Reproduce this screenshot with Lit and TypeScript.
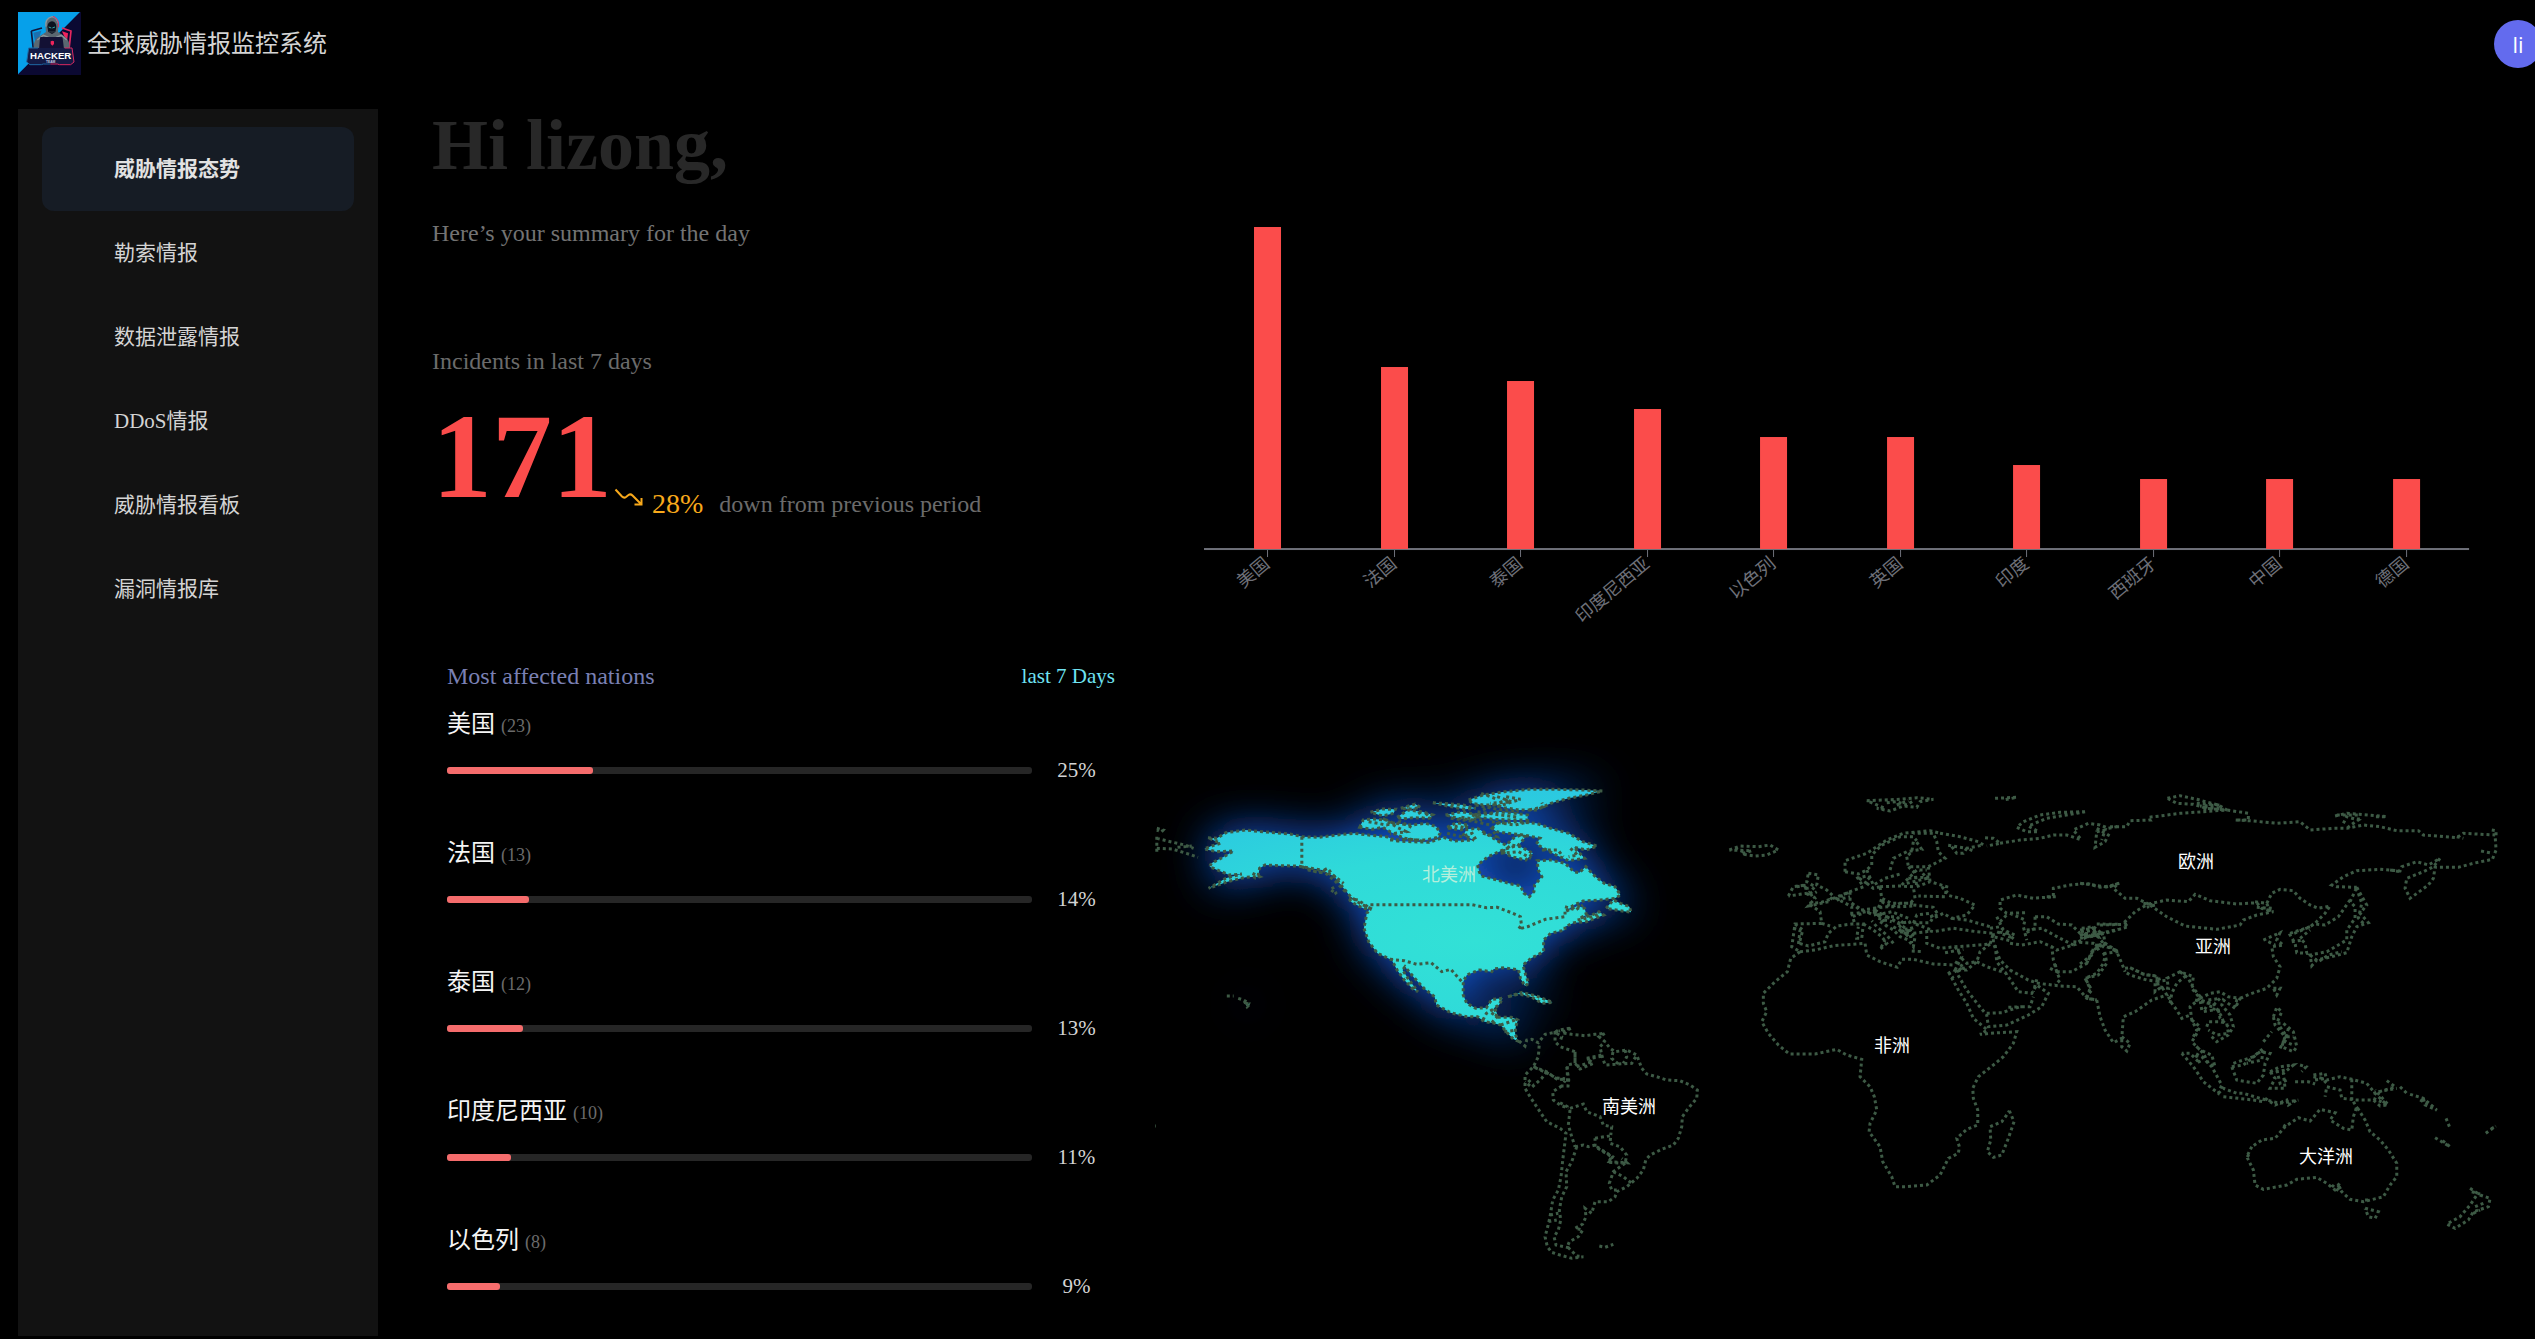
import { LitElement, html, svg, css } from "lit";
import { customElement, state } from "lit/decorators.js";

interface Nation {
  name: string;
  count: number;
  share: number;
}

const MENU = ["威胁情报态势", "勒索情报", "数据泄露情报", "DDoS情报", "威胁情报看板", "漏洞情报库"];

const NATIONS: Nation[] = [
  { name: "美国", count: 23, share: 25 },
  { name: "法国", count: 13, share: 14 },
  { name: "泰国", count: 12, share: 13 },
  { name: "印度尼西亚", count: 10, share: 11 },
  { name: "以色列", count: 8, share: 9 },
];

const CHART: [string, number][] = [
  ["美国", 23],
  ["法国", 13],
  ["泰国", 12],
  ["印度尼西亚", 10],
  ["以色列", 8],
  ["英国", 8],
  ["印度", 6],
  ["西班牙", 5],
  ["中国", 5],
  ["德国", 5],
];

/** A group of outlines drawn on its own sheet: origin on the map, and sheet units per map unit. */
interface Sheet {
  x: number;
  y: number;
  sx: number;
  sy: number;
  lines: string[];
}

const trace = (s: Sheet, line: string, close = false): string => {
  const n = line.trim().split(/[\s,]+/).map(Number);
  let d = "";
  for (let i = 0; i < n.length; i += 2) {
    d += `${i ? "L" : "M"}${(s.x + n[i] / s.sx).toFixed(1)} ${(s.y + n[i + 1] / s.sy).toFixed(1)}`;
  }
  return close ? d + "Z" : d;
};

const outline = (s: Sheet, close = false): string => s.lines.map((l) => trace(s, l, close)).join("");

const NORTH_AMERICA: Sheet = {
  x: -15,
  y: 83,
  sx: 2.8,
  sy: 3,
  lines: [
    "190,293 215,295 240,278 295,270 350,276 420,282 455,290 500,292 550,285 600,280 640,285 690,290 720,303 760,305 810,307 850,292 880,303 935,300 905,285 915,268 945,265 975,285 1005,305 1025,315 1045,295 1065,285 1080,290 1060,315 1020,328 975,350 945,375 950,395 955,408 1000,420 1040,432 1065,437 1075,460 1090,470 1103,455 1105,435 1125,410 1115,390 1112,362 1150,360 1190,370 1215,395 1230,398 1248,380 1275,410 1300,430 1330,440 1345,465 1330,475 1290,480 1240,483 1215,495 1190,515 1225,498 1245,505 1250,525 1230,535 1265,525 1285,515 1298,525 1250,545 1215,548 1190,560 1190,570 1150,580 1130,600 1130,635 1095,655 1072,675 1080,705 1088,730 1078,738 1065,715 1060,690 1020,683 990,687 985,695 950,690 915,705 905,725 905,765 915,790 940,805 970,803 985,778 1015,775 1005,795 990,805 1000,820 995,832 1040,832 1058,840 1052,860 1050,880 1058,903 1045,897 1025,875 1010,855 985,848 965,845 945,830 915,830 870,818 830,795 825,770 795,745 765,710 742,680 735,690 750,715 778,755 765,748 740,720 720,690 705,660 665,640 640,605 627,565 635,520 645,505 615,490 590,470 570,445 545,410 510,390 480,385 440,378 390,377 350,375 335,385 330,410 295,412 245,425 192,445 240,415 285,402 250,405 195,380 200,370 235,350 262,333 215,335 180,327 200,318 225,310 190,293",
    "615,262 625,240 650,237 690,240 710,250 760,255 800,250 830,260 840,280 835,292 800,300 770,300 740,295 720,285 700,275 680,262 650,268",
    "645,217 680,207 715,208 710,220 680,228",
    "720,232 750,210 790,215 820,225 810,235 765,233 735,237",
    "730,205 770,192 785,202 760,207",
    "820,188 870,192 905,195 940,205 910,208 860,198",
    "855,225 900,215 950,225 930,240 890,235",
    "860,262 885,248 920,255 900,270 865,265",
    "920,180 960,165 1020,155 1090,148 1170,148 1240,150 1295,153 1250,165 1200,175 1150,190 1110,210 1060,210 1020,203 1000,195 960,195 930,190",
    "930,225 975,222 1000,215 1050,220 1085,225 1085,240 1040,240 990,238 950,232",
    "985,265 1000,250 1050,245 1110,250 1150,265 1200,280 1240,305 1280,318 1250,330 1215,322 1245,355 1200,362 1165,345 1130,325 1110,312 1120,295 1075,285 1030,280 1000,275",
    "1015,335 1040,315 1065,320 1100,340 1080,360 1040,350",
    "1305,505 1325,480 1345,490 1370,500 1375,517 1350,513 1320,508",
    "1030,770 1070,757 1110,768 1155,787 1125,790 1095,770 1060,762",
    "585,475 610,480 648,508 625,505 590,485",
    "295,790 308,792 300,800",
  ],
};

const NORTH_AMERICA_BORDERS: Sheet = {
  ...NORTH_AMERICA,
  lines: [
    "453,290 453,380",
    "453,380 500,398 525,385 540,405 570,430",
    "470,390 520,400 548,425 575,455",
    "645,494 930,494 970,503 1000,502 1040,518 1065,530 1068,555 1060,567 1085,560 1135,538 1190,530 1190,515",
    "700,658 740,662 775,673 815,668 845,695 870,688 905,730",
    "960,840 970,820 985,810 1000,810",
    "985,848 1000,830 980,815",
    "1010,855 1055,838",
    "1020,875 1055,870",
    "538,440 550,462 535,450",
    "315,400 335,410 320,415",
    "1025,170 1065,178 1000,200",
    "940,195 1000,208 1060,215",
    "1000,170 1040,185 980,190",
    "955,160 1000,178",
    "960,210 1000,190 1030,180",
    "870,235 940,245 980,255",
    "900,232 960,240",
    "945,215 1010,225 1060,232",
    "985,245 1050,255 1090,245",
    "1090,210 1130,200 1125,188",
    "680,235 720,262 745,275 700,282",
    "640,245 690,255 730,245 760,262",
    "700,300 760,298 800,305",
    "780,215 790,232",
    "800,220 815,235",
    "860,280 900,290 930,280 940,298",
    "865,265 890,258 915,265",
    "1010,340 1060,335 1095,355",
    "1125,330 1170,330 1185,350",
    "1205,325 1225,345 1200,350",
    "960,280 1000,290 985,268",
    "1190,500 1220,510 1240,495",
    "1225,540 1250,535 1290,520",
    "243,768 262,768",
    "275,775 290,780 308,792",
    "47,265 65,270 60,276 47,270",
    "47,295 85,305 125,315 150,325",
    "105,322 145,318",
    "47,325 90,327 130,340 162,352",
    "47,290 47,340",
    "40,1158 44,1158",
  ],
};

const SOUTH_AMERICA: Sheet = {
  x: 325,
  y: 343,
  sx: 3,
  sy: 3,
  lines: [
    "117,123 135,138 140,120 155,118 175,128 195,103 225,97 235,90 275,84 245,98 275,103 315,107 345,103 375,100 357,110 375,125 390,145 405,155 440,150 470,165 485,205 500,222 530,230 560,240 600,242 630,255 652,270 650,295 625,325 607,350 605,380 595,415 580,435 545,448 510,465 497,480 490,510 470,535 440,560 410,575 405,590 385,605 345,605 335,640 315,625 318,650 308,672 285,685 308,690 295,710 268,725 262,740 290,768 310,770 275,775 240,765 215,757 202,740 195,710 203,680 210,650 218,600 235,570 243,530 248,480 258,400 240,385 200,365 180,335 150,290 135,265 135,225 160,200 175,170 178,130",
    "290,440 275,485 258,515 260,560 245,590 238,630 242,660 235,690 222,710 228,735 275,745",
    "210,645 235,640",
    "205,665 230,660",
    "160,200 200,215 230,237 262,240 262,195 285,190 285,155 240,140 225,125 225,97 240,92",
    "165,203 200,218 228,234 255,236",
    "260,200 266,240 264,258 245,258 255,242",
    "200,215 185,235 155,262 135,245",
    "145,240 160,255",
    "245,258 218,275 220,300 240,315 265,325",
    "240,308 262,320 268,330",
    "270,330 265,375 275,410 285,440",
    "270,325 310,312 320,335 360,350 370,375 395,380 392,405",
    "345,415 392,407 390,430 420,440 440,465 435,490 385,487 395,470 345,440 345,415",
    "350,440 398,470 388,485 440,488 425,475",
    "285,440 310,435 325,440 345,435",
    "435,490 400,515 388,550 395,570 410,570",
    "400,515 430,530 455,550",
    "285,155 285,190 300,207 340,190 320,175 365,165 360,140 375,125",
    "320,178 368,168",
    "290,200 335,185",
    "365,165 375,195 415,192 395,175 400,150",
    "415,192 455,190 470,165",
    "435,150 440,170 430,190",
    "230,100 245,110 240,125",
    "358,738 375,742 400,733",
  ],
};

const AFRICA_EUROPE: Sheet = {
  x: 545,
  y: 113,
  sx: 3,
  sy: 3,
  lines: [
    "300,545 272,565 262,605 225,635 190,670 190,700 200,725 185,755 205,790 235,825 268,852 345,852 410,838 440,855 485,868 480,920 510,950 523,980 530,1020 510,1060 507,1085 540,1130 548,1175 575,1220 585,1250 620,1250 680,1245 720,1215 745,1165 775,1150 778,1130 770,1105 800,1078 833,1065 833,1020 820,985 818,955 835,920 880,885 910,860 940,820 950,785 895,788 840,793 862,780 820,745 800,700 775,660 745,605",
    "300,545 345,540 400,527 495,520 500,555 540,575 592,592 605,568 640,568 700,582 765,585",
    "928,1022 942,1055 925,1105 905,1155 880,1162 862,1145 872,1110 870,1070 905,1055 920,1035 928,1022",
    "88,240 120,228 175,230 210,225 235,240 200,255 165,258 125,252 155,242 88,240",
    "105,235 135,248",
    "500,92 550,90 600,88 650,83 700,88 660,95 650,112 610,108 570,123 530,115 555,115 500,92",
    "560,98 590,95 620,105 640,92",
    "590,105 625,92",
    "885,85 950,82 910,90",
    "1155,125 1080,127 1020,135 970,155 950,172 980,185 1015,185 985,168 1040,145 1100,135 1155,125",
    "325,310 355,315 350,345 380,360 400,378 385,395 340,405 325,408 345,385 330,365 345,350 320,335 325,310",
    "265,378 280,350 315,345 320,370 265,378",
    "290,350 320,345 325,380 350,365",
    "435,305 435,272 500,250 560,210 610,190 690,182 720,190",
    "435,305 475,312 500,300 515,285 515,255 545,225 600,200 640,200 650,212",
    "500,300 520,345 555,325 600,312",
    "570,300 580,265 620,245 665,238 645,210",
    "470,325 500,318 515,335",
    "620,260 625,290 685,290 735,265 715,245 710,215 700,190 640,190",
    "640,215 635,245 620,260",
    "720,190 780,200 835,215 850,225 800,235 740,225",
    "755,230 770,250 790,250 800,235 825,245",
    "855,203 880,205 900,220 860,228",
    "900,220 960,210 1020,205 1060,195 1100,195 1145,210",
    "1140,205 1120,180 1165,160 1200,165 1225,175 1260,168",
    "1190,175 1225,195 1215,215 1185,232 1190,185 1215,180 1205,210",
    "500,340 470,320 490,350 450,365 405,383 360,398 325,400 360,425 365,460 285,462 275,530 300,545",
    "285,462 308,480 298,520 325,528 375,515 385,490 410,468 455,462 490,462 485,505 470,505 475,470",
    "280,475 300,480 295,525",
    "365,460 390,468",
    "455,430 465,465",
    "490,462 520,480 545,500 560,520 540,538 555,510",
    "580,520 560,495 530,470 515,452",
    "540,455 580,480 600,500 625,510 640,530 645,500 610,470 570,445",
    "600,485 630,490 635,520",
    "640,490 680,485",
    "680,480 680,520 720,535 765,530 800,528 870,522 880,490 830,485 760,475 700,485 680,480",
    "690,478 640,460 650,435 690,430 700,445 730,430 755,445 800,435 825,405 780,385 740,375",
    "640,458 690,458 700,440",
    "755,445 800,450 870,470",
    "640,405 700,412 715,435 690,440",
    "540,350 600,348 640,350 645,385 630,400 575,400 545,385 540,350",
    "650,350 690,335 740,350 735,380 655,378",
    "725,350 740,365 730,378",
    "625,290 645,310 650,350",
    "685,290 690,335",
    "625,325 690,320",
    "605,345 630,320 650,300 680,300",
    "620,340 680,325 660,300",
    "450,365 450,395 480,420 535,415 545,385",
    "500,340 520,355 540,350",
    "405,383 455,410 455,440 490,430",
    "420,380 450,365",
    "410,390 450,380",
    "455,400 500,428 535,420",
    "520,415 560,410 600,410 640,408",
    "545,395 575,410 600,400 640,400",
    "530,435 575,425 625,445 635,475 600,480",
    "520,425 545,445 560,470",
    "525,420 555,440 590,440 610,460 590,478",
    "560,440 600,460 630,455",
    "470,430 500,425 520,435 545,430",
    "580,470 615,490 635,478",
    "535,445 575,455",
    "605,480 625,500",
    "765,530 785,560 765,600 800,600 830,575 800,580 780,560",
    "735,548 790,538",
    "765,575 790,590 770,605 800,590",
    "635,543 670,545",
    "765,600 800,660 835,705 860,735 865,770 920,765 985,735 1025,710 1045,670 1010,645 995,670 955,665 925,620 890,575 885,520",
    "745,605 760,625",
    "860,730 905,728 960,710 990,710 1000,680",
    "925,712 970,710",
    "830,575 860,590 920,610 935,600",
    "870,522 840,545 830,575",
    "880,490 880,520 900,570 930,600 985,630 1015,640 1080,648 1130,650 1160,685 1190,690",
    "1010,628 1000,665",
    "930,520 965,525 1020,515 1055,530 1060,570 1070,605 1080,630 1065,645",
    "980,480 1025,475 1080,505 1120,525 1070,540 1055,530",
    "1005,440 1040,440 1075,462 1115,465 1140,490 1180,500",
    "1005,440 1005,475 975,490",
    "975,428 920,430 900,415 900,390 950,375 1000,385 1060,380 1060,355 1110,345 1160,340 1200,352 1245,345",
    "930,430 975,450 970,470 980,510",
    "900,455 925,430",
    "1040,380 1070,380",
    "890,440 910,480 945,495 930,512 880,500",
    "870,475 900,470 920,490 890,485 940,505",
    "1070,605 1115,605 1160,580 1180,540 1215,520 1255,545",
    "1050,595 1070,605 1065,580",
    "1120,525 1160,500 1210,490 1215,520",
    "1120,515 1180,520 1205,530",
    "1145,475 1180,470 1205,490 1150,500 1140,485 1190,480 1165,500",
    "1155,490 1195,500 1175,470",
    "1190,462 1260,463",
    "1200,490 1255,478",
    "1160,580 1175,545 1210,530",
    "1255,545 1215,550 1220,580 1195,615 1155,625 1175,660 1155,685",
  ],
};

const ASIA_OCEANIA: Sheet = {
  x: 925,
  y: 113,
  sx: 3,
  sy: 3,
  lines: [
    "90,170 140,170 150,152 210,150 205,142 240,138 300,130 370,125 440,120 505,130 505,150 465,150 520,153 590,160 660,155 690,180 760,175 800,175 850,165 900,170 950,182 1015,182 1030,195 1130,203 1150,190 1245,195 1248,240 1237,268 1180,280 1135,292 1065,292 1060,325 1045,345 990,385 975,355 980,325 1030,305 1060,290 1080,265 1045,285 1010,275 965,290 960,303 900,298 830,302 790,320 755,345 770,350 830,352",
    "1130,200 1150,205",
    "930,300 960,305",
    "1235,180 1248,182 1248,200",
    "1203,243 1237,250",
    "262,85 300,77 350,88 415,105 440,120 380,115 340,103 290,100 262,85",
    "350,100 420,105 360,108 430,118",
    "370,118 435,120",
    "765,138 800,130 920,140 880,140",
    "790,160 800,140 835,150 820,160 800,175",
    "770,135 835,135 835,160",
    "830,352 860,405 840,430 865,458 830,470 815,500 800,548 755,560 710,570 695,587 690,555 740,545 800,510 800,480 825,445 825,410 810,395 830,352",
    "835,370 845,400 835,445 850,460",
    "690,555 715,575 745,555 785,545",
    "810,390 775,440 735,465 705,462",
    "560,400 575,370 600,358 640,362 660,385 690,405 715,415 750,408 735,430 705,460 690,470 630,495 645,520 650,548 680,550 675,520 660,505 690,480",
    "630,490 690,470 700,462",
    "635,515 670,510",
    "550,510 600,488 590,510 610,525 575,530 580,560 600,590 590,625 560,655 510,672 470,690 465,710",
    "565,515 585,525",
    "580,655 600,655 590,675 580,655",
    "205,402 260,390 325,395 345,373 390,392 470,402 530,398 545,415 580,425 530,435 490,450 480,465 410,478 315,468 260,440 205,402",
    "525,395 560,400 570,425",
    "530,412 575,415",
    "0,340 40,345 85,352 115,340 100,355 135,385 170,385 205,402 165,425 130,460 145,470 75,490 30,500",
    "75,352 118,340",
    "190,400 225,405 200,412",
    "60,465 130,463 145,455",
    "0,480 40,475 45,500 0,495 30,488",
    "0,505 50,495 70,520 45,530",
    "70,520 110,545 125,580 135,605",
    "45,525 80,530 105,540",
    "0,582 35,555 40,535 80,525",
    "70,548 75,560 70,580 50,610 15,625 30,655 20,685 50,690",
    "135,595 150,593 190,612 235,620 240,635 200,630 150,615 135,605",
    "150,593 195,615 235,618",
    "50,690 60,740 75,780 100,818 125,805 130,740 165,725 215,690 260,675 245,650 225,665 225,635 265,630",
    "125,800 150,820 140,843 125,830 125,800",
    "230,620 235,650 265,655 260,620",
    "260,625 300,605 340,620 335,655 360,685 330,710 335,750 350,780 340,800",
    "265,680 275,700 290,720 305,745 330,735",
    "270,700 275,670 290,640 320,615",
    "300,605 325,625 340,655 365,685",
    "360,685 390,670 420,665 445,680 480,685 465,715 430,690 425,705 450,735 460,770 445,795 410,815 390,795",
    "365,720 360,690 395,700 390,715 415,720 420,745 445,770",
    "345,690 385,700 370,725 400,720",
    "385,690 420,685 405,700",
    "380,770 385,755 420,755 440,760 445,790 410,795 385,780",
    "400,700 425,740 430,755",
    "335,750 360,770 345,800 335,815 360,840 395,855 405,890 385,880 370,850 345,825",
    "305,850 340,890 370,935 415,970 425,945 395,890 365,860 345,850 360,880 330,850 305,850",
    "415,970 430,955 470,970 490,970 540,985 600,1000 655,990",
    "430,980 520,990 550,995",
    "555,985 585,1005 620,990 625,1005 650,990",
    "455,890 490,885 540,845 570,850 555,880 550,915 530,940 470,930 455,890",
    "460,880 520,860 550,835 545,870 500,880",
    "580,740 590,712 605,725 590,760 610,760 640,785 650,830 640,845 605,830 615,800 585,765 580,740",
    "600,770 620,800 640,800",
    "625,775 615,815 640,825",
    "600,835 620,795",
    "550,815 575,785",
    "570,905 600,890 640,885 610,910 615,955 570,955 585,925 570,905",
    "590,900 600,940 620,930",
    "570,910 615,900",
    "660,885 678,890 665,905",
    "645,935 685,935 705,942",
    "700,915 735,910 740,930 780,920 815,928 860,940 885,970 920,1005 900,1008 880,990 830,990 785,985 780,960 740,950 735,980",
    "700,920 725,925 740,940",
    "705,930 740,925",
    "815,928 815,990",
    "880,970 915,960 945,950 915,928",
    "880,985 925,1005 885,960",
    "895,965 950,955",
    "960,950 980,970",
    "990,973 1030,985 1070,1020 1035,1005 1030,985",
    "1020,990 1055,1008",
    "1098,1045 1110,1075",
    "1065,1103 1085,1115 1110,1130 1085,1110",
    "1217,1090 1247,1068",
    "1235,1070 1240,1080",
    "515,1130 500,1160 520,1200 525,1245 550,1258 620,1245 650,1228 710,1222 740,1240 765,1260 785,1250 770,1240 785,1265 810,1288 850,1295 910,1280 930,1245 950,1220 950,1180 925,1140 900,1110 870,1085 855,1050 830,1010 820,1040 815,1080 790,1075 750,1050 765,1028 720,1018 690,1053 655,1043 615,1070 585,1105 545,1110 515,1130",
    "500,1155 515,1165",
    "610,1065 625,1075",
    "755,1245 775,1262",
    "820,995 835,1020",
    "855,1290 870,1290",
    "855,1315 895,1325 885,1345 865,1340 855,1315",
    "1170,1255 1200,1275 1230,1285 1225,1310 1180,1325 1165,1350 1125,1375 1100,1362 1140,1340 1170,1305 1190,1275",
    "1175,1265 1200,1272",
    "1185,1310 1210,1300",
    "1180,1330 1200,1320",
  ],
};

const CONTINENTS: { name: string; x: number; y: number; muted?: boolean }[] = [
  { name: "北美洲", x: 294, y: 218, muted: true },
  { name: "南美洲", x: 474, y: 450 },
  { name: "非洲", x: 737, y: 389 },
  { name: "欧洲", x: 1041, y: 205 },
  { name: "亚洲", x: 1058, y: 290 },
  { name: "大洋洲", x: 1171, y: 500 },
];

@customElement("incident-chart")
export class IncidentChart extends LitElement {
  static styles = css`
    :host {
      display: block;
    }
    .chart {
      display: block;
      width: 100%;
      height: auto;
    }
    .bar {
      fill: #fb4c4b;
    }
    .axis {
      fill: #6e7079;
    }
    .label {
      fill: #6e7079;
      font: 18px "Noto Sans CJK SC", sans-serif;
      text-anchor: end;
    }
  `;

  render() {
    const base = 440;
    const left = 49;
    const step = 1265 / CHART.length;
    return html`
      <svg class="chart" viewBox="0 0 1380 548" role="img" aria-label="Incidents by nation">
        <rect class="axis" x=${left} y=${base - 1} width="1265" height="2"></rect>
        ${CHART.map(([name, value], i) => {
          const x = Math.round(left + step * (i + 0.5));
          return svg`
            <rect class="bar" x=${x - 13} y=${base - value * 14} width="27" height=${value * 14}></rect>
            <rect class="axis" x=${x} y=${base} width="1" height="8"></rect>
            <text class="label" dy="6" transform="translate(${x} ${base + 12}) rotate(-40)">${name}</text>`;
        })}
      </svg>
    `;
  }
}

@customElement("threat-map")
export class ThreatMap extends LitElement {
  static styles = css`
    :host {
      display: block;
    }
    .map {
      display: block;
      width: 100%;
      height: auto;
    }
    .border {
      fill: none;
      stroke: #3d5a45;
      stroke-width: 3;
      stroke-dasharray: 3 3;
    }
    .glow {
      fill: #1257d4;
      stroke: #1257d4;
      stroke-width: 3;
    }
    .land {
      fill: url(#land);
    }
    .label {
      fill: #ffffff;
      font: 18px "Noto Sans CJK SC", sans-serif;
      text-anchor: middle;
    }
    .muted {
      fill: #b4efdc;
    }
  `;

  render() {
    const land = outline(NORTH_AMERICA, true);
    return html`
      <svg class="map" viewBox="0 0 1380 660" role="img" aria-label="World threat map">
        <defs>
          <radialGradient
            id="land"
            gradientUnits="userSpaceOnUse"
            cx="0"
            cy="0"
            r="1"
            gradientTransform="translate(320 283) scale(460 170)"
          >
            <stop offset="0" stop-color="#32e1d6"></stop>
            <stop offset="0.5" stop-color="#2fdad9"></stop>
            <stop offset="1" stop-color="#2ac4e2"></stop>
          </radialGradient>
          <filter id="blur" filterUnits="userSpaceOnUse" x="-60" y="0" width="680" height="500">
            <feGaussianBlur stdDeviation="22"></feGaussianBlur>
          </filter>
        </defs>
        <path class="glow" d=${land} filter="url(#blur)"></path>
        <path class="land" d=${land}></path>
        <path class="border" d=${land}></path>
        <path class="border" d=${outline(NORTH_AMERICA_BORDERS)}></path>
        <path class="border" d=${outline(SOUTH_AMERICA)}></path>
        <path class="border" d=${outline(AFRICA_EUROPE)}></path>
        <path class="border" d=${outline(ASIA_OCEANIA)}></path>
        ${CONTINENTS.map(
          (c) => svg`<text class="label ${c.muted ? "muted" : ""}" x=${c.x} y=${c.y} dy="6">${c.name}</text>`,
        )}
      </svg>
    `;
  }
}

@customElement("app-root")
export class AppRoot extends LitElement {
  @state() private active = 0;

  static styles = css`
    :host {
      display: flex;
      flex-direction: column;
      box-sizing: border-box;
      min-height: 100vh;
      padding-bottom: 3px;
      overflow: hidden;
      background: #000000;
      color: #e5e5e5;
      font-family: "Liberation Serif", "Noto Sans CJK SC", serif;
      font-size: 24px;
      line-height: 36px;
    }
    h1,
    h2,
    p,
    ul {
      margin: 0;
      padding: 0;
      font-weight: normal;
      font-size: inherit;
      list-style: none;
    }
    button {
      border: 0;
      padding: 0;
      background: none;
      font: inherit;
      cursor: pointer;
    }
    .header {
      display: flex;
      align-items: center;
      padding: 12px 0 34px 18px;
    }
    .logo {
      width: 63px;
      height: 63px;
    }
    .logo-word {
      fill: #ffffff;
      font: bold 29px "Liberation Sans", sans-serif;
      text-anchor: middle;
    }
    .logo-sub {
      fill: #c5cbe0;
      font: bold 10px "Liberation Sans", sans-serif;
      text-anchor: middle;
    }
    .title {
      flex: 1;
      margin-left: 6px;
      color: #d4d4d4;
    }
    .avatar {
      flex: none;
      width: 48px;
      height: 48px;
      margin-right: -7px;
      border-radius: 50%;
      background: #636bee;
      color: #ffffff;
      font-family: "Open Sans", sans-serif;
      font-size: 22px;
      line-height: 48px;
    }
    .body {
      display: flex;
      flex: 1;
    }
    .sidebar {
      flex: none;
      box-sizing: border-box;
      width: 360px;
      margin-left: 18px;
      padding: 18px 24px;
      background: #121212;
    }
    .item {
      display: block;
      padding: 24px 72px;
      border-radius: 12px;
      color: #d4d4d4;
      font-size: 21px;
      line-height: 36px;
      text-decoration: none;
    }
    .item.active {
      background: #161c25;
      color: #e2e2e2;
      font-weight: bold;
    }
    .main {
      display: grid;
      flex: 1;
      min-width: 0;
      grid-template-columns: minmax(0, 11fr) minmax(0, 21fr);
      grid-template-rows: auto 1fr;
      margin-left: 54px;
    }
    .hello {
      color: #282828;
      font-size: 72px;
      font-weight: bold;
      line-height: 72px;
    }
    .summary {
      margin-top: 34px;
      color: #737373;
    }
    .caption {
      margin-top: 92px;
      color: #6b6b6b;
    }
    .stats {
      display: flex;
      align-items: flex-end;
      margin-top: 18px;
      color: #6b6b6b;
      white-space: nowrap;
    }
    .total {
      margin-bottom: 5px;
      color: #fb4c4b;
      font-size: 120px;
      font-weight: bold;
      line-height: 120px;
    }
    .trend {
      width: 32px;
      height: 24px;
      margin-bottom: 12px;
      fill: none;
      stroke: #f8a91b;
      stroke-width: 2;
    }
    .change {
      margin: 0 16px 0 8px;
      color: #f8a91b;
      font-size: 28px;
    }
    .nations {
      padding: 1px 40px 0 15px;
    }
    .nations-head {
      display: flex;
      justify-content: space-between;
      color: #7a80b4;
    }
    .range {
      color: #6fe3f3;
      font-size: 21px;
    }
    .list {
      display: grid;
      gap: 50px;
      margin-top: 12px;
    }
    .name {
      height: 36px;
      color: #f5f5f5;
    }
    .count {
      color: #6b6b6b;
      font-size: 18px;
      line-height: 18px;
    }
    .level {
      display: flex;
      align-items: center;
      gap: 6px;
      margin-top: 13px;
      color: #d4d4d4;
      font-size: 21px;
      line-height: 30px;
    }
    .track {
      flex: 1;
      height: 7px;
      border-radius: 3px;
      background: #262626;
    }
    .fill {
      height: 7px;
      border-radius: 3px;
      background: #f56c6c;
    }
    .share {
      width: 77px;
      text-align: center;
    }
  `;

  private choose(e: Event, i: number) {
    e.preventDefault();
    this.active = i;
  }

  private logo() {
    return html`
      <svg class="logo" viewBox="0 0 189 189" role="img" aria-label="Hacker Team">
        <rect width="189" height="189" fill="#0b0932"></rect>
        <path d="M0 0H186L0 187Z" fill="#06a0ea"></path>
        <path d="M40 57 72 48 M40 57 46 112" fill="none" stroke="#10163c" stroke-width="5"></path>
        <path d="M46 62 70 56 64 75 52 92Z" fill="#1d6fae"></path>
        <path d="M132 48 159 57 153 112" fill="none" stroke="#e6275f" stroke-width="5"></path>
        <path d="M132 58 150 64 147 90 140 76Z" fill="#f0225c"></path>
        <path d="M47 108Q46 82 66 72L84 60Q78 20 102 14Q126 22 120 60L138 72Q156 84 155 108Z" fill="#5a6770"></path>
        <path d="M84 44Q80 20 102 14Q116 16 121 34" fill="none" stroke="#8d98a0" stroke-width="4"></path>
        <path d="M105 13Q124 20 122 46" fill="none" stroke="#e3265c" stroke-width="3"></path>
        <path d="M88 44Q90 29 102 28Q115 30 115 45L112 60 102 66 91 60Z" fill="#0c1220"></path>
        <path d="M92 45l8 3M111 45l-8 3" stroke="#2fa3a8" stroke-width="3"></path>
        <path d="M96 57v5M102 57v6M108 57v5" stroke="#4f5d68" stroke-width="2"></path>
        <path d="M58 84 76 70 92 76M146 84 130 70 114 76" fill="none" stroke="#89949c" stroke-width="4"></path>
        <path d="M66 78Q66 75 69 75H130Q134 75 134 79L138 112H63Z" fill="#131134"></path>
        <path d="M98 88Q103 84 108 88L108 96 103 101 98 96Z" fill="#ee245b"></path>
        <path d="M32 108H162L168 150 158 157H118L110 153H84L76 157H36L26 150Z" fill="#141a45"></path>
        <path d="M97 156H76L70 158H36L26 150 32 108H60" fill="none" stroke="#1f6aa5" stroke-width="3"></path>
        <path d="M97 156H118L124 158H158L168 150 162 108H140" fill="none" stroke="#d82a62" stroke-width="3"></path>
        <text class="logo-word" x="98" y="142">HACKER</text>
        <text class="logo-sub" x="98" y="152">TEAM</text>
      </svg>
    `;
  }

  render() {
    return html`
      <header class="header">
        ${this.logo()}
        <span class="title">全球威胁情报监控系统</span>
        <button class="avatar" type="button">li</button>
      </header>
      <div class="body">
        <nav class="sidebar">
          ${MENU.map(
            (label, i) => html`<a
              class="item ${i === this.active ? "active" : ""}"
              href="#${i}"
              @click=${(e: Event) => this.choose(e, i)}
              >${label}</a
            >`,
          )}
        </nav>
        <main class="main">
          <section>
            <h1 class="hello">Hi lizong,</h1>
            <p class="summary">Here’s your summary for the day</p>
            <p class="caption">Incidents in last 7 days</p>
            <div class="stats">
              <span class="total">171</span>
              <svg class="trend" viewBox="0 0 32 24" aria-hidden="true">
                <path d="M3.500 3.500 10 10.500q2 2 4 .5l2.500-2q2-1.500 4 .5L29 18M22.500 18.500H29.500V12"></path>
              </svg>
              <span class="change">28%</span>
              <span>down from previous period</span>
            </div>
          </section>
          <incident-chart></incident-chart>
          <section class="nations">
            <div class="nations-head">
              <h2>Most affected nations</h2>
              <button class="range" type="button">last 7 Days</button>
            </div>
            <ul class="list">
              ${NATIONS.map(
                (n) => html`<li>
                  <div class="name">${n.name} <span class="count">(${n.count})</span></div>
                  <div class="level">
                    <div class="track"><div class="fill" style="width:${n.share}%"></div></div>
                    <span class="share">${n.share}%</span>
                  </div>
                </li>`,
              )}
            </ul>
          </section>
          <threat-map></threat-map>
        </main>
      </div>
    `;
  }
}
